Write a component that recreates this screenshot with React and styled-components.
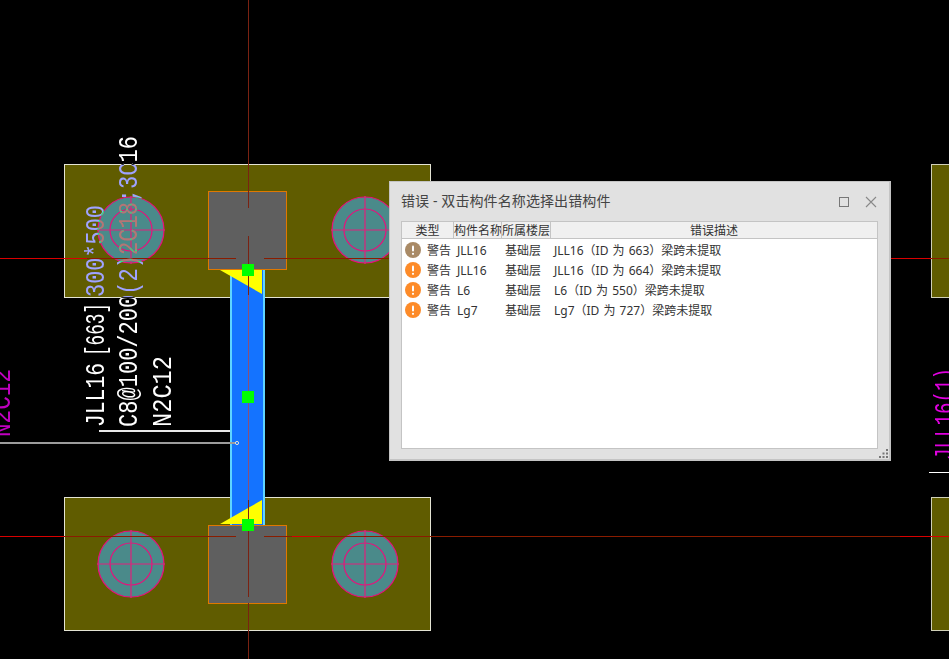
import React from 'react';
import styled, { createGlobalStyle } from 'styled-components';

const GlobalStyle = createGlobalStyle`
    html, body {
        margin: 0;
        padding: 0;
        background: #000;
        overflow: hidden;
    }
`
const Viewport = styled.div`
    position: relative;
    width: 949px;
    height: 659px;
    overflow: hidden;
    background: #000;
`
const Canvas = styled.svg`
    display: block;
    width: 949px;
    height: 659px;
    shape-rendering: crispEdges;
`
const Label = styled.text`
    font-family: "Liberation Mono", monospace;
    font-size: 27px;
    fill: ${props => props.color || '#fff'};
    mix-blend-mode: ${props => props.color ? 'normal' : 'difference'};
    shape-rendering: auto;
`
const Round = styled.g`
    shape-rendering: auto;
`

const Window = styled.div`
    position: absolute;
    left: 389px;
    top: 181px;
    width: 502px;
    height: 280px;
    box-sizing: border-box;
    border: 1px solid #c4c4c4;
    border-right-width: 2px;
    border-bottom-width: 2px;
    background: #e1e1e1;
    display: flex;
    flex-direction: column;
    padding: 0 11px 10px 11px;
    font-family: "Noto Sans", "Noto Sans CJK SC", sans-serif;
    color: #333;
`
const TitleBar = styled.div`
    height: 39px;
    flex: none;
    display: flex;
    align-items: center;
    justify-content: space-between;
`
const Title = styled.div`
    font-size: 14px;
    letter-spacing: 0.1px;
    color: #444;
    line-height: 37px;
    padding-bottom: 2px;
`
const WindowButtons = styled.div`
    display: flex;
    align-items: center;
    gap: 15px;
    margin-right: 1px;
    color: #777;
`
const Table = styled.div`
    flex: 1;
    box-sizing: border-box;
    background: #fff;
    border: 1px solid #c4c4c4;
    font-size: 12px;
`
const HeaderRow = styled.div`
    display: grid;
    grid-template-columns: 52px 48px 49px 1fr;
    height: 17px;
    box-sizing: border-box;
    background: #f0f0f0;
    border-bottom: 1px solid #c4c4c4;
`
const HeaderCell = styled.div`
    text-align: center;
    line-height: 18px;
    height: 16px;
    white-space: nowrap;
    overflow: hidden;
    color: #333;
    border-right: ${props => props.$last ? '0' : '1px solid #c4c4c4'};
`
const Row = styled.div`
    display: grid;
    grid-template-columns: 22px 30px 48px 49px 1fr;
    height: 20px;
    align-items: center;
    line-height: 20px;
    white-space: nowrap;
    padding-left: 3px;
`
const Cell = styled.div`
    color: #333;
    padding-top: 2px;
    word-spacing: 1px;
`
const Grip = styled.svg`
    position: absolute;
    right: 1px;
    bottom: 1px;
`

const Pad = ({ y }) => (
    <rect x="64.5" y={y + 0.5} width="366" height="133" fill="#605c00" stroke="#e4e4d4" strokeWidth="1.5" />
)
const Pile = ({ x, y }) => (
    <Round>
        <circle cx={x} cy={y} r="33" fill="#4a8a8a" stroke="#e8107c" strokeWidth="1.2" />
        <circle cx={x} cy={y} r="21" fill="none" stroke="#e8107c" strokeWidth="1.2" />
        <path d={`M${x - 34} ${y}H${x + 34}M${x} ${y - 34}V${y + 34}`} stroke="#e0207c" strokeWidth="1.2" />
    </Round>
)
const Column = ({ y }) => (
    <rect x="208.5" y={y + 0.5} width="78" height="78" fill="#5f5f5f" stroke="#e07800" strokeWidth="1.5" />
)
const Handle = ({ y }) => <rect x="242" y={y - 6} width="12" height="12" fill="#00ff00" />

const WarnIcon = ({ color }) => (
    <svg width="16" height="16" viewBox="0 0 16 16">
        <circle cx="8" cy="8" r="8" fill={color} />
        <rect x="7" y="3.5" width="2" height="6" rx="1" fill="#fff" />
        <circle cx="8" cy="11.8" r="1.1" fill="#fff" />
    </svg>
)

const errors = [
    { name: 'JLL16', desc: 'JLL16（ID 为 663）梁跨未提取', color: '#a98a66' },
    { name: 'JLL16', desc: 'JLL16（ID 为 664）梁跨未提取', color: '#fd8b29' },
    { name: 'L6', desc: 'L6（ID 为 550）梁跨未提取', color: '#fd8b29' },
    { name: 'Lg7', desc: 'Lg7（ID 为 727）梁跨未提取', color: '#fd8b29' },
]

const Drawing = () => (
    <Canvas viewBox="0 0 949 659">
        <rect width="949" height="659" fill="#000" />

        <Pad y={164} />
        <Pad y={497} />
        <rect x="931.5" y="164.5" width="30" height="133" fill="#605c00" stroke="#d0d0b8" strokeWidth="1.5" />
        <rect x="931.5" y="497.5" width="30" height="133" fill="#605c00" stroke="#d0d0b8" strokeWidth="1.5" />

        <Pile x={131} y={230} />
        <Pile x={365} y={230} />
        <Pile x={131} y={564} />
        <Pile x={365} y={564} />

        <rect x="231" y="269" width="34" height="256" fill="#1473ff" />
        <path d="M231 269V525M264 269V525" stroke="#5fd4ff" strokeWidth="2" />
        <polygon points="220,270 262,270 262,294" fill="#ffff00" shapeRendering="auto" />
        <polygon points="220,524 262,524 262,500" fill="#ffff00" shapeRendering="auto" />

        <Column y={191} />
        <Column y={525} />

        <path d="M0 258.5H236M264 258.5H949M0 536.5H236M264 536.5H949" stroke="#8a1c00" />
        <path d="M0 258.5H87M889 258.5H931M0 536.5H64M292 536.5H320M900 536.5H949" stroke="#d80000" />
        <path d="M248.5 0V208M248.5 236V597M248.5 603V659" stroke="#7a2212" />
        <path d="M248.5 295V500" stroke="#8a5078" />

        <Handle y={270} />
        <Handle y={397} />
        <Handle y={525} />

        <path d="M99 431H230" stroke="#e8e8e8" strokeWidth="2" />
        <path d="M0 443H235" stroke="#9c9c9c" strokeWidth="2" />
        <Round>
            <circle cx="237" cy="443" r="1.6" fill="#1473ff" stroke="#e0e0e0" />
        </Round>
        <path d="M929 472.5H949" stroke="#fff" />

        <Label transform="translate(104 427) rotate(-90)" textLength="64" lengthAdjust="spacingAndGlyphs">JLL16</Label>
        <Label transform="translate(104 356) rotate(-90)" textLength="53" lengthAdjust="spacingAndGlyphs">[663]</Label>
        <Label transform="translate(104 297) rotate(-90)" textLength="92" lengthAdjust="spacingAndGlyphs">300*500</Label>
        <Label transform="translate(137 427) rotate(-90)" textLength="291" lengthAdjust="spacingAndGlyphs">C8@100/200(2)2C18;3C16</Label>
        <Label transform="translate(171 427) rotate(-90)" textLength="71" lengthAdjust="spacingAndGlyphs">N2C12</Label>

        <Label color="#c000c0" transform="translate(10 437) rotate(-90)" textLength="68" lengthAdjust="spacingAndGlyphs">N2C12</Label>
        <Label color="#e000e0" transform="translate(953 460) rotate(-90)" textLength="92" lengthAdjust="spacingAndGlyphs">JLL16(1)</Label>
    </Canvas>
)

const App = () => (
    <Viewport>
        <GlobalStyle />
        <Drawing />
        <Window>
            <TitleBar>
                <Title>错误 - 双击构件名称选择出错构件</Title>
                <WindowButtons>
                    <svg width="12" height="12" viewBox="0 0 12 12">
                        <rect x="1.5" y="1.5" width="9" height="9" fill="none" stroke="#777" />
                    </svg>
                    <svg width="12" height="12" viewBox="0 0 12 12">
                        <path d="M1 1L11 11M11 1L1 11" stroke="#888" strokeWidth="1.1" />
                    </svg>
                </WindowButtons>
            </TitleBar>
            <Table>
                <HeaderRow>
                    <HeaderCell>类型</HeaderCell>
                    <HeaderCell>构件名称</HeaderCell>
                    <HeaderCell>所属楼层</HeaderCell>
                    <HeaderCell $last>错误描述</HeaderCell>
                </HeaderRow>
                {errors.map((e, i) => (
                    <Row key={i}>
                        <WarnIcon color={e.color} />
                        <Cell>警告</Cell>
                        <Cell>{e.name}</Cell>
                        <Cell>基础层</Cell>
                        <Cell>{e.desc}</Cell>
                    </Row>
                ))}
            </Table>
            <Grip width="9" height="9" viewBox="0 0 9 9">
                <path d="M7 0h2v2H7zM3.5 3.5h2v2h-2zM7 3.5h2v2H7zM0 7h2v2H0zM3.5 7h2v2h-2zM7 7h2v2H7z" fill="#777" />
            </Grip>
        </Window>
    </Viewport>
)

export default App;
